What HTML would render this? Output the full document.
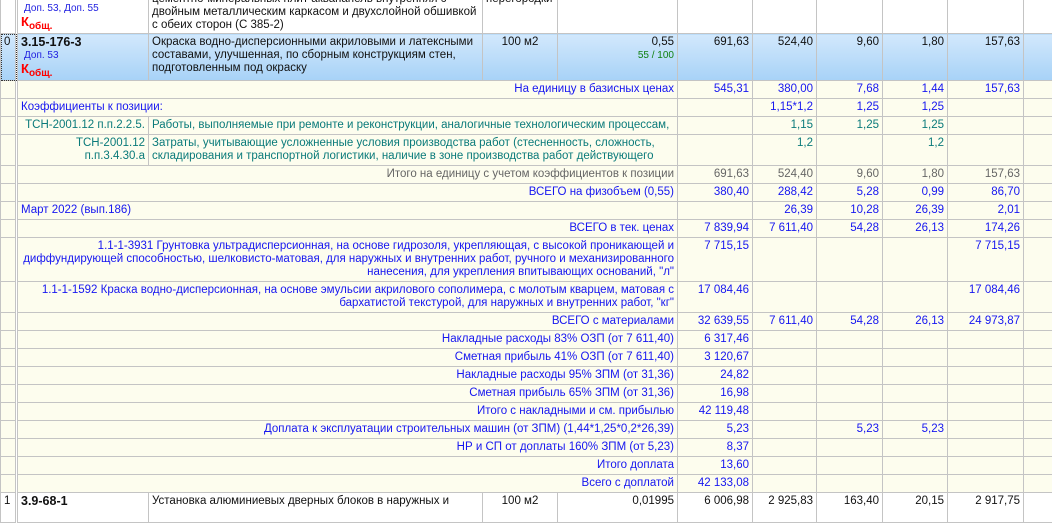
<!DOCTYPE html>
<html><head><meta charset="utf-8"><style>
html,body{margin:0;padding:0;background:#fff;}
body{width:1052px;height:503px;overflow:hidden;position:relative;font-family:"Liberation Sans",Arial,sans-serif;}
#w{position:absolute;left:0;top:-14px;}
table{border-collapse:collapse;table-layout:fixed;width:1052px;font-size:11.5px;}
td{border:1px solid #c4c4c4;padding:2px 3px 0 3px;vertical-align:top;line-height:13px;overflow:hidden;white-space:nowrap;}
tr.s td{background:#fdfdee;height:15px;padding-top:2px;}
tr.s td{color:#1616f0;}
.r{text-align:right;}
.g{color:#666 !important;}
.t{color:#0a7a7a !important;}
tr.sel td{background:linear-gradient(#d2e8fc,#a7d2f7);}
tr.w td{background:#fff;}
.code{font-weight:bold;font-size:12.5px;color:#111;}
.dop{font-size:10px;color:#2020e0;padding-left:3px;}
.k{color:#f00;font-weight:bold;font-size:13px;}
.k sub{font-size:10px;vertical-align:-3px;}
.grn{color:#108010;font-size:10px;}
.c0{border-right:3px double #c4c4c4;}
</style></head><body><div id="w"><table>
<colgroup><col style="width:16px"><col style="width:132px"><col style="width:334px"><col style="width:75px"><col style="width:120px"><col style="width:75px"><col style="width:64px"><col style="width:66px"><col style="width:65px"><col style="width:76px"><col style="width:29px"></colgroup>
<tr class="w" style="height:47px"><td class="c0"></td><td><div class="dop" style="margin-top:0">Доп.53, Доп.55, Доп.57,</div><div class="dop">Доп. 53, Доп. 55</div><div class="k">К<sub>общ.</sub></div></td><td style="white-space:normal;color:#111;padding-top:6px">цементно-минеральных плит аквапанель внутренняя с двойным металлическим каркасом и двухслойной обшивкой с обеих сторон (С 385-2)</td><td style="color:#111;padding-top:6px">перегородки</td><td class="r"><span class="grn">50 / 100</span></td><td></td><td></td><td></td><td></td><td></td><td></td></tr>
<tr class="sel" style="height:45px"><td class="c0" style="outline:1px dotted #333;outline-offset:-1px;color:#111">0</td><td><div class="code">3.15-176-3</div><div class="dop">Доп. 53</div><div class="k">К<sub>общ.</sub></div></td><td style="white-space:normal;color:#111">Окраска водно-дисперсионными акриловыми и латексными составами, улучшенная, по сборным конструкциям стен, подготовленным под окраску</td><td style="text-align:center;color:#111">100 м2</td><td class="r" style="color:#111">0,55<br><span class="grn">55 / 100</span></td><td class="r" style="color:#111">691,63</td><td class="r" style="color:#111">524,40</td><td class="r" style="color:#111">9,60</td><td class="r" style="color:#111">1,80</td><td class="r" style="color:#111">157,63</td><td></td></tr>
<tr class="s"><td class="c0"></td><td colspan="4" class="r">На единицу в базисных ценах</td><td class="r">545,31</td><td class="r">380,00</td><td class="r">7,68</td><td class="r">1,44</td><td class="r">157,63</td><td></td></tr>
<tr class="s"><td class="c0"></td><td colspan="4">Коэффициенты к позиции:</td><td></td><td class="r">1,15*1,2</td><td class="r">1,25</td><td class="r">1,25</td><td></td><td></td></tr>
<tr class="s"><td class="c0"></td><td class="r t">ТСН-2001.12 п.п.2.2.5.</td><td colspan="3" class="t">Работы, выполняемые при ремонте и реконструкции, аналогичные технологическим процессам,</td><td></td><td class="r t">1,15</td><td class="r t">1,25</td><td class="r t">1,25</td><td></td><td></td></tr>
<tr class="s" style="height:31px"><td class="c0"></td><td class="r t">ТСН-2001.12<br>п.п.3.4.30.а</td><td colspan="3" class="t">Затраты, учитывающие усложненные условия производства работ (стесненность, сложность,<br>складирования и транспортной логистики, наличие в зоне производства работ действующего</td><td></td><td class="r t">1,2</td><td></td><td class="r t">1,2</td><td></td><td></td></tr>
<tr class="s"><td class="c0"></td><td colspan="4" class="r g">Итого на единицу с учетом коэффициентов к позиции</td><td class="r g">691,63</td><td class="r g">524,40</td><td class="r g">9,60</td><td class="r g">1,80</td><td class="r g">157,63</td><td></td></tr>
<tr class="s"><td class="c0"></td><td colspan="4" class="r">ВСЕГО на физобъем (0,55)</td><td class="r">380,40</td><td class="r">288,42</td><td class="r">5,28</td><td class="r">0,99</td><td class="r">86,70</td><td></td></tr>
<tr class="s"><td class="c0"></td><td colspan="4">Март 2022 (вып.186)</td><td></td><td class="r">26,39</td><td class="r">10,28</td><td class="r">26,39</td><td class="r">2,01</td><td></td></tr>
<tr class="s"><td class="c0"></td><td colspan="4" class="r">ВСЕГО в тек. ценах</td><td class="r">7 839,94</td><td class="r">7 611,40</td><td class="r">54,28</td><td class="r">26,13</td><td class="r">174,26</td><td></td></tr>
<tr class="s" style="height:44px"><td class="c0"></td><td colspan="4" class="r">1.1-1-3931 Грунтовка ультрадисперсионная, на основе гидрозоля, укрепляющая, с высокой проникающей и<br>диффундирующей способностью, шелковисто-матовая, для наружных и внутренних работ, ручного и механизированного<br>нанесения, для укрепления впитывающих оснований, "л"</td><td class="r">7 715,15</td><td></td><td></td><td></td><td class="r">7 715,15</td><td></td></tr>
<tr class="s" style="height:31px"><td class="c0"></td><td colspan="4" class="r">1.1-1-1592 Краска водно-дисперсионная, на основе эмульсии акрилового сополимера, с молотым кварцем, матовая с<br>бархатистой текстурой, для наружных и внутренних работ, "кг"</td><td class="r">17 084,46</td><td></td><td></td><td></td><td class="r">17 084,46</td><td></td></tr>
<tr class="s"><td class="c0"></td><td colspan="4" class="r">ВСЕГО с материалами</td><td class="r">32 639,55</td><td class="r">7 611,40</td><td class="r">54,28</td><td class="r">26,13</td><td class="r">24 973,87</td><td></td></tr>
<tr class="s"><td class="c0"></td><td colspan="4" class="r">Накладные расходы 83% ОЗП (от 7 611,40)</td><td class="r">6 317,46</td><td></td><td></td><td></td><td></td><td></td></tr>
<tr class="s"><td class="c0"></td><td colspan="4" class="r">Сметная прибыль 41% ОЗП (от 7 611,40)</td><td class="r">3 120,67</td><td></td><td></td><td></td><td></td><td></td></tr>
<tr class="s"><td class="c0"></td><td colspan="4" class="r">Накладные расходы 95% ЗПМ (от 31,36)</td><td class="r">24,82</td><td></td><td></td><td></td><td></td><td></td></tr>
<tr class="s"><td class="c0"></td><td colspan="4" class="r">Сметная прибыль 65% ЗПМ (от 31,36)</td><td class="r">16,98</td><td></td><td></td><td></td><td></td><td></td></tr>
<tr class="s"><td class="c0"></td><td colspan="4" class="r">Итого с накладными и см. прибылью</td><td class="r">42 119,48</td><td></td><td></td><td></td><td></td><td></td></tr>
<tr class="s"><td class="c0"></td><td colspan="4" class="r">Доплата к эксплуатации строительных машин (от ЗПМ) (1,44*1,25*0,2*26,39)</td><td class="r">5,23</td><td></td><td class="r">5,23</td><td class="r">5,23</td><td></td><td></td></tr>
<tr class="s"><td class="c0"></td><td colspan="4" class="r">НР и СП от доплаты 160% ЗПМ (от 5,23)</td><td class="r">8,37</td><td></td><td></td><td></td><td></td><td></td></tr>
<tr class="s"><td class="c0"></td><td colspan="4" class="r">Итого доплата</td><td class="r">13,60</td><td></td><td></td><td></td><td></td><td></td></tr>
<tr class="s"><td class="c0"></td><td colspan="4" class="r">Всего с доплатой</td><td class="r">42 133,08</td><td></td><td></td><td></td><td></td><td></td></tr>
<tr class="w" style="height:30px"><td class="c0" style="color:#111">1</td><td><div class="code">3.9-68-1</div></td><td style="color:#111">Установка алюминиевых дверных блоков в наружных и</td><td style="text-align:center;color:#111">100 м2</td><td class="r" style="color:#111">0,01995</td><td class="r" style="color:#111">6 006,98</td><td class="r" style="color:#111">2 925,83</td><td class="r" style="color:#111">163,40</td><td class="r" style="color:#111">20,15</td><td class="r" style="color:#111">2 917,75</td><td></td></tr>
</table></div></body></html>
